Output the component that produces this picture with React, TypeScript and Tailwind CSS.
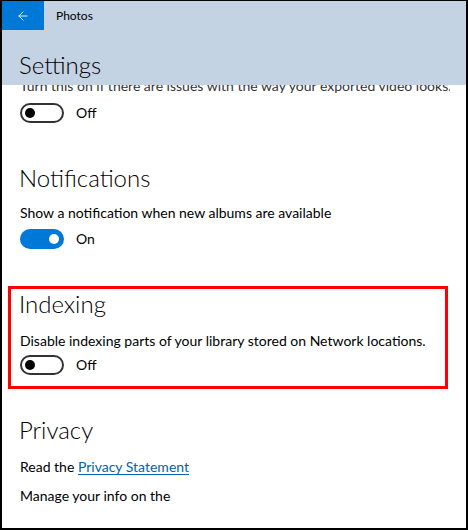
import { ArrowLeft } from 'lucide-react';

function Toggle({ on }: { on: boolean }) {
  return (
    <div className="flex items-center gap-3 h-5">
      {on ? (
        <div className="w-11 h-5 rounded-full bg-[#0078d7] flex items-center justify-end pr-[5px]">
          <div className="w-[10px] h-[10px] rounded-full bg-white" />
        </div>
      ) : (
        <div className="w-11 h-5 rounded-full border-2 border-[#333] flex items-center pl-[3px]">
          <div className="w-[10px] h-[10px] rounded-full bg-black" />
        </div>
      )}
      <span className="text-[14px] leading-5 text-black">{on ? 'On' : 'Off'}</span>
    </div>
  );
}

function Heading({ children }: { children: React.ReactNode }) {
  return <h2 className="text-[24px] leading-8 font-light text-black -ml-px">{children}</h2>;
}

export default function App() {
  return (
    <div
      className="w-[468px] h-[530px] overflow-hidden bg-white border-l-2 border-r-2 border-b-2 border-t border-black flex flex-col"
      style={{ fontFamily: 'Lato, "Open Sans", sans-serif' }}
    >
      {/* Title bar + page header */}
      <div className="h-[84px] bg-[#c3d3e3] shrink-0 flex flex-col">
        <div className="flex items-center h-[29px]">
          <div className="w-[42px] h-[29px] bg-[#0078d7] flex items-center justify-center text-white">
            <ArrowLeft size={14} strokeWidth={1.5} />
          </div>
          <span className="ml-[12px] text-[12px] text-black">Photos</span>
        </div>
        <div className="pl-[18px] mt-[19px]">
          <Heading>Settings</Heading>
        </div>
      </div>

      <div className="pl-[18px] pr-4 flex flex-col">
        {/* scrolled line, mostly hidden under the header */}
        <div className="h-[8px] overflow-hidden flex items-end">
          <p className="text-[14px] leading-5 text-[#333] whitespace-nowrap -mb-[3px]">
            Turn this on if there are issues with the way your exported video looks.
          </p>
        </div>
        <div className="mt-[10px]">
          <Toggle on={false} />
        </div>

        <div className="mt-[39px]">
          <Heading>Notifications</Heading>
          <p className="mt-[9px] text-[14px] leading-5 text-black">Show a notification when new albums are available</p>
          <div className="mt-[6px]">
            <Toggle on />
          </div>
        </div>

        <div className="mt-[37px] -ml-[12px] w-[440px] border-[3px] border-[#ff0000] pl-[9px] pb-[11px]">
          <div className="-mt-px">
            <Heading>Indexing</Heading>
          </div>
          <p className="mt-[11px] text-[14px] leading-5 text-black">
            Disable indexing parts of your library stored on Network locations.
          </p>
          <div className="mt-[4px]">
            <Toggle on={false} />
          </div>
        </div>

        <div className="mt-[25px]">
          <Heading>Privacy</Heading>
          <p className="mt-[11px] text-[14px] leading-5 text-black">
            Read the{' '}
            <a className="text-[#0063b1] underline underline-offset-2">Privacy Statement</a>
          </p>
          <p className="mt-[9px] text-[14px] leading-5 text-black">Manage your info on the</p>
        </div>
      </div>
    </div>
  );
}
